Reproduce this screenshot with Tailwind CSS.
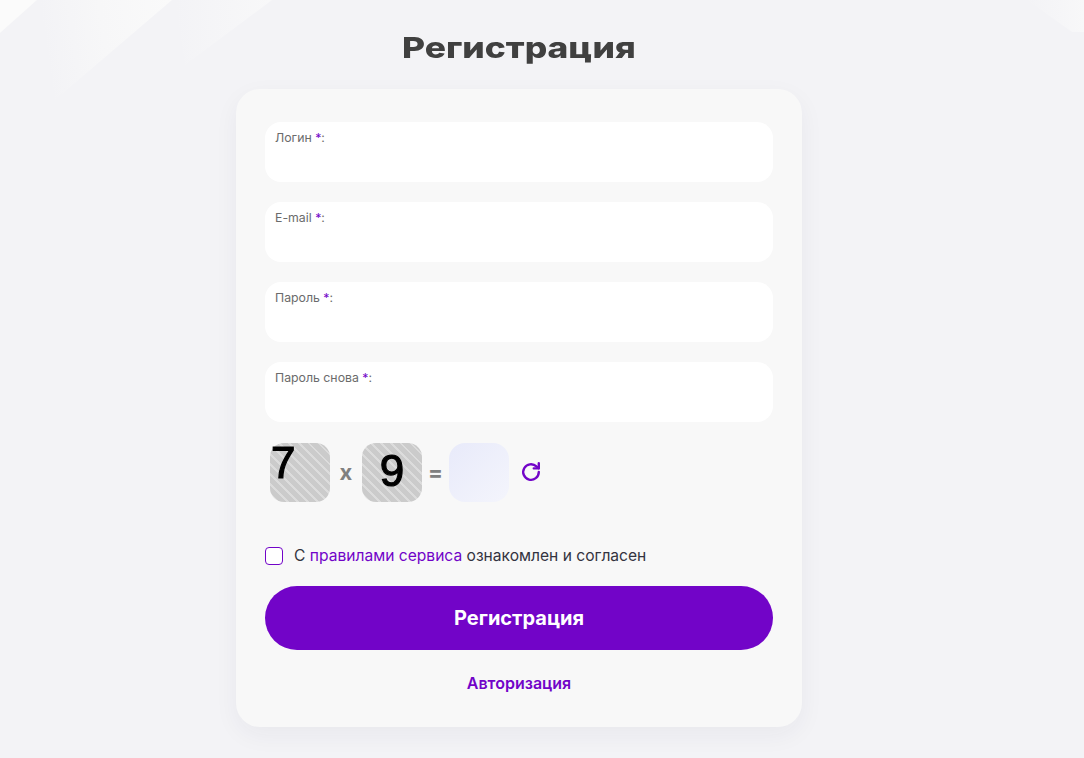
<!DOCTYPE html>
<html lang="ru">
<head>
    <meta charset="UTF-8">
    <meta name="viewport" content="width=device-width, initial-scale=1.0">
    <title>Регистрация</title>
    <script src="https://cdn.jsdelivr.net/npm/@tailwindcss/browser@4"></script>
</head>
<body class="bg-[#f3f3f6] font-['Inter',sans-serif] h-[758px] overflow-hidden relative">
    <!-- background shapes -->
    <svg class="absolute top-0 left-0" width="1084" height="110" viewBox="0 0 1084 110" fill="none">
        <defs>
            <linearGradient id="fadeA" x1="0" y1="0.1" x2="1" y2="0">
                <stop offset="0" stop-color="#f3f3f6"/>
                <stop offset="0.45" stop-color="#f7f7f8"/>
                <stop offset="1" stop-color="#fafafa"/>
            </linearGradient>
            <linearGradient id="fadeB" x1="0" y1="0" x2="1" y2="0">
                <stop offset="0" stop-color="#f3f3f6"/>
                <stop offset="1" stop-color="#f8f8f9"/>
            </linearGradient>
        </defs>
        <polygon points="0,0 37,0 0,33" fill="#fbfbfb"/>
        <polygon points="40,0 172,0 55,100" fill="url(#fadeA)"/>
        <polygon points="175,0 272,0 185,65" fill="url(#fadeB)"/>
        <polygon points="1027,0 1084,0 1084,32 1072,32" fill="url(#fadeB)"/>
    </svg>

    <div class="relative flex flex-col items-center w-[566px] ml-[236px]">
        <h1 class="mt-[28px] h-[40px] leading-[40px] text-[29px] font-extrabold text-[#404040] scale-x-[1.22]">Регистрация</h1>

        <div class="mt-[21px] w-full h-[638px] bg-[#f8f8f8] rounded-[24px] shadow-[0_8px_24px_rgba(40,40,70,0.05)] px-[29px] pt-[33px]">
            <div class="flex flex-col gap-[20px]">
                <div class="h-[60px] bg-white rounded-[16px] px-[10px] pt-[8px] text-[12.3px] leading-[15px] text-[#6b6b6b]">Логин <span class="text-[#7204c8]">*</span>:</div>
                <div class="h-[60px] bg-white rounded-[16px] px-[10px] pt-[8px] text-[12.3px] leading-[15px] text-[#6b6b6b]">E-mail <span class="text-[#7204c8]">*</span>:</div>
                <div class="h-[60px] bg-white rounded-[16px] px-[10px] pt-[8px] text-[12.3px] leading-[15px] text-[#6b6b6b]">Пароль <span class="text-[#7204c8]">*</span>:</div>
                <div class="h-[60px] bg-white rounded-[16px] px-[10px] pt-[8px] text-[12.3px] leading-[15px] text-[#6b6b6b]">Пароль снова <span class="text-[#7204c8]">*</span>:</div>
            </div>

            <!-- captcha -->
            <div class="flex items-center mt-[20px] h-[60px]">
                <div class="ml-[5px] w-[60px] h-[59px] rounded-[14px] bg-[repeating-linear-gradient(45deg,#cbcbcb_0,#cbcbcb_5px,#dcdcdc_5px,#dcdcdc_7px)] font-['Liberation_Sans',sans-serif] text-[44px] leading-[40px] text-black pl-[1px] [-webkit-text-stroke:1.2px_black]"><span class="blur-[0.4px]">7</span></div>
                <span class="w-[32px] text-center text-[22px] font-bold text-[#808080] leading-none">x</span>
                <div class="w-[60px] h-[59px] rounded-[14px] bg-[repeating-linear-gradient(45deg,#cbcbcb_0,#cbcbcb_5px,#dcdcdc_5px,#dcdcdc_7px)] font-['Liberation_Sans',sans-serif] text-[44px] leading-[56px] text-black text-center [-webkit-text-stroke:1.2px_black]"><span class="blur-[0.4px]">9</span></div>
                <span class="w-[27px] text-center text-[22px] font-bold text-[#808080] leading-none">=</span>
                <div class="w-[60px] h-[59px] rounded-[16px] bg-gradient-to-br from-[#e8eafa] to-[#f4f5fc]"></div>
                <svg class="ml-[11px]" width="22" height="22" viewBox="0 0 24 24" fill="none" stroke="#7204c8" stroke-width="2.6" stroke-linecap="round" stroke-linejoin="round">
                    <path d="M20.5 12a8.5 8.5 0 1 1-2.6-6.1L20.5 8"/>
                    <path d="M20.5 2.5V8H15"/>
                </svg>
            </div>

            <!-- agree -->
            <label class="flex items-center mt-[44px] h-[20px] text-[15.6px] text-[#333340]">
                <span class="w-[18px] h-[18px] rounded-[4px] border border-[#7204c8] bg-white"></span>
                <span class="ml-[11px]">С <a class="text-[#7204c8]">правилами сервиса</a> ознакомлен и согласен</span>
            </label>

            <button class="block mt-[20px] w-full h-[64px] rounded-[32px] bg-[#7204c8] text-white text-[20px] font-bold">Регистрация</button>

            <a class="block mt-[23px] text-center text-[16px] leading-[20px] font-semibold text-[#7204c8]">Авторизация</a>
        </div>
    </div>
</body>
</html>
